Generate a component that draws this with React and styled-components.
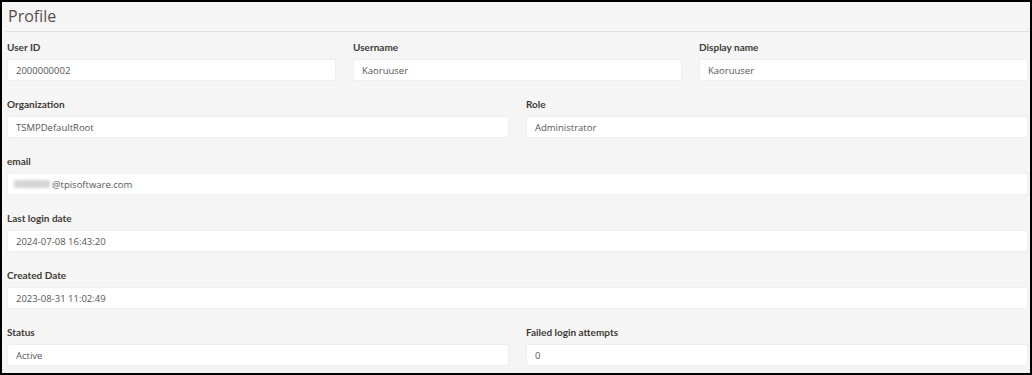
import styled, { createGlobalStyle } from "styled-components";

const GlobalStyle = createGlobalStyle`
  html, body {
    margin: 0;
    padding: 0;
  }
  body {
    font-family: "Open Sans", "Noto Sans", "Liberation Sans", sans-serif;
    background: #000;
  }
  * {
    box-sizing: border-box;
  }
`;

const Frame = styled.div`
  width: 1032px;
  height: 375px;
  border: 2px solid #000;
  background: #f5f5f5;
  overflow: hidden;
`;

const Header = styled.div`
  padding: 2px 0 3px 3px;
  border-bottom: 1px solid #e0e0e0;
  margin-left: 3px;
`;

const Title = styled.h2`
  margin: 0;
  font-size: 16px;
  line-height: 24px;
  font-weight: 400;
  color: #55504b;
`;

const Body = styled.div`
  padding: 8px 2px 0 5px;
  display: flex;
  flex-direction: column;
  gap: 16px;
`;

const Row = styled.div`
  display: grid;
  grid-template-columns: repeat(${(p) => p.cols || 1}, 1fr);
  column-gap: 17px;
`;

const Field = styled.div`
  display: flex;
  flex-direction: column;
  gap: 5px;
`;

const Label = styled.label`
  font-family: Lato, "Open Sans", sans-serif;
  font-size: 10px;
  line-height: 14px;
  font-weight: 700;
  color: #3f3a35;
`;

const Value = styled.div`
  height: 22px;
  background: #fff;
  border-radius: 2px;
  border: 1px solid #efefef;
  padding: 0 8px;
  display: flex;
  align-items: center;
  font-size: 9.5px;
  color: #555;
`;

const Masked = styled.span`
  display: inline-block;
  width: 36px;
  height: 8px;
  margin-left: -2px;
  margin-right: 2px;
  background: #d4d4d4;
  filter: blur(1.5px);
`;

const rows = [
  [
    ["User ID", "2000000002"],
    ["Username", "Kaoruuser"],
    ["Display name", "Kaoruuser"],
  ],
  [
    ["Organization", "TSMPDefaultRoot"],
    ["Role", "Administrator"],
  ],
  [["email", "@tpisoftware.com", true]],
  [["Last login date", "2024-07-08 16:43:20"]],
  [["Created Date", "2023-08-31 11:02:49"]],
  [
    ["Status", "Active"],
    ["Failed login attempts", "0"],
  ],
];

const App = () => {
  return (
    <Frame>
      <GlobalStyle />
      <Header>
        <Title>Profile</Title>
      </Header>
      <Body>
        {rows.map((row, i) => (
          <Row cols={row.length} key={i}>
            {row.map(([label, value, masked]) => (
              <Field key={label}>
                <Label>{label}</Label>
                <Value>
                  {masked && <Masked />}
                  {value}
                </Value>
              </Field>
            ))}
          </Row>
        ))}
      </Body>
    </Frame>
  );
};

export default App;
